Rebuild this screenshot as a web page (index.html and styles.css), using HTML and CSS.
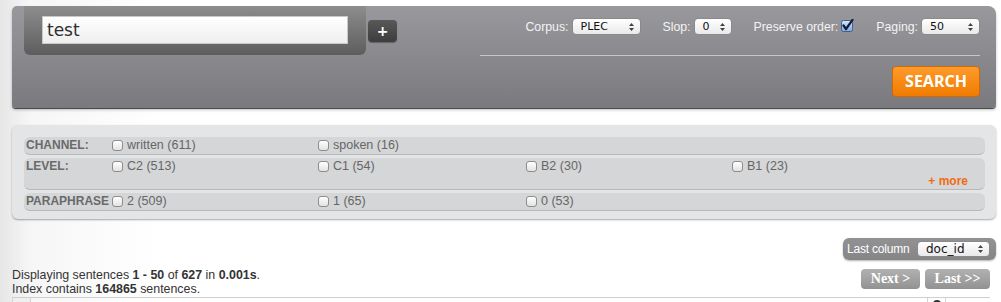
FILE: index.html
```html
<!DOCTYPE html>
<html>
<head>
<meta charset="utf-8">
<title>Search</title>
<link rel="stylesheet" href="styles.css">
</head>
<body>
<div class="top-panel">
  <div class="query-box"><div class="query-input">test</div></div>
  <div class="plus-btn">+</div>
  <div class="controls">
    <div class="options">
      <span class="opt"><span class="lbl">Corpus:</span><span class="sel sel-corpus">PLEC<svg class="arr" width="5" height="8" viewBox="0 0 5 8"><path d="M2.5 0 L5 3 H0Z M2.5 8 L5 5 H0Z" fill="#444"/></svg></span></span>
      <span class="opt"><span class="lbl">Slop:</span><span class="sel sel-slop">0<svg class="arr" width="5" height="8" viewBox="0 0 5 8"><path d="M2.5 0 L5 3 H0Z M2.5 8 L5 5 H0Z" fill="#444"/></svg></span></span>
      <span class="opt"><span class="lbl">Preserve order:</span><svg class="chk" width="13" height="13" viewBox="0 0 13 13"><defs><linearGradient id="cb" x1="0" y1="0" x2="0" y2="1"><stop offset="0" stop-color="#d9e8fb"/><stop offset="1" stop-color="#7fa7dd"/></linearGradient></defs><rect x="0.5" y="1.5" width="11" height="11" rx="2" fill="url(#cb)" stroke="#3d5f93"/><path d="M2.5 6.5 L5 10 L11.5 0.8" fill="none" stroke="#0f1d3a" stroke-width="2.2" stroke-linecap="round" stroke-linejoin="round"/></svg></span>
      <span class="opt"><span class="lbl">Paging:</span><span class="sel sel-paging">50<svg class="arr" width="5" height="8" viewBox="0 0 5 8"><path d="M2.5 0 L5 3 H0Z M2.5 8 L5 5 H0Z" fill="#444"/></svg></span></span>
    </div>
    <div class="actions"><div class="search-btn">SEARCH</div></div>
  </div>
</div>

<div class="filter-panel">
  <div class="frow">
    <div class="flabel">CHANNEL:</div>
    <div class="fopt"><span class="cb"></span>written (611)</div>
    <div class="fopt"><span class="cb"></span>spoken (16)</div>
  </div>
  <div class="frow frow-tall">
    <div class="flabel">LEVEL:</div>
    <div class="fopt"><span class="cb"></span>C2 (513)</div>
    <div class="fopt fopt-wide"><span class="cb"></span>C1 (54)</div>
    <div class="fopt"><span class="cb"></span>B2 (30)</div>
    <div class="fopt fopt-last"><span class="cb"></span>B1 (23)</div>
    <div class="more">+ more</div>
  </div>
  <div class="frow">
    <div class="flabel">PARAPHRASE</div>
    <div class="fopt"><span class="cb"></span>2 (509)</div>
    <div class="fopt fopt-wide"><span class="cb"></span>1 (65)</div>
    <div class="fopt"><span class="cb"></span>0 (53)</div>
  </div>
</div>

<div class="lastcol">
  <span class="lastcol-lbl">Last column</span>
  <span class="sel sel-lastcol">doc_id<svg class="arr" width="5" height="8" viewBox="0 0 5 8"><path d="M2.5 0 L5 3 H0Z M2.5 8 L5 5 H0Z" fill="#444"/></svg></span>
</div>

<div class="status-row">
  <div class="status">
    <div>Displaying sentences <b>1 - 50</b> of <b>627</b> in <b>0.001s</b>.</div>
    <div>Index contains <b>164865</b> sentences.</div>
  </div>
  <div class="pager">
    <span class="pbtn pbtn-next">Next &gt;</span>
    <span class="pbtn pbtn-last">Last &gt;&gt;</span>
  </div>
</div>

<div class="results">
  <div class="rc rc-a"></div>
  <div class="rc rc-b"></div>
  <div class="rc rc-c"><span class="dot"></span></div>
  <div class="rc rc-d"></div>
</div>
</body>
</html>
```

FILE: styles.css
```css
html, body {
  margin: 0;
  padding: 0;
}
body {
  background: linear-gradient(to right, #e6e6e6 0, #f6f6f6 30px, #fff 160px, #fff 100%);
  font-family: "Liberation Sans", Arial, sans-serif;
  font-size: 12px;
  color: #333;
  overflow: hidden;
}

/* ---------- top panel ---------- */
.top-panel {
  margin: 6px 5px 0 12px;
  height: 102px;
  display: flex;
  align-items: flex-start;
  background: linear-gradient(#99989d, #7a797e);
  border-radius: 5px 8px 4px 4px;
  box-shadow: 0 1px 0 #4a4a4c, 0 2px 3px rgba(0,0,0,0.25);
}
.query-box {
  margin-left: 12px;
  width: 342px;
  height: 49px;
  box-sizing: border-box;
  padding: 10px 18px;
  background: linear-gradient(#8d8d8d, #5d5d5d);
  border-radius: 0 0 6px 6px;
}
.query-input {
  height: 28px;
  box-sizing: border-box;
  background: linear-gradient(#ffffff, #eeeeee);
  border: 1px solid #c9c9c9;
  padding-left: 4px;
  font-family: "DejaVu Sans", sans-serif;
  font-size: 17px;
  line-height: 26px;
  color: #2e2e2e;
}
.plus-btn {
  margin: 14px 0 0 2px;
  width: 29px;
  height: 22px;
  background: linear-gradient(#585858, #3d3d3d);
  border-radius: 4px;
  color: #fff;
  font-family: "DejaVu Sans", sans-serif;
  font-weight: bold;
  font-size: 14px;
  line-height: 22px;
  text-align: center;
  box-shadow: 0 1px 1px rgba(0,0,0,0.3);
}
.controls {
  margin-left: auto;
  margin-right: 16px;
  width: 500px;
  display: flex;
  flex-direction: column;
}
.options {
  height: 50px;
  box-sizing: border-box;
  padding-top: 12px;
  border-bottom: 1px solid #c7c6ca;
  display: flex;
  justify-content: flex-end;
  align-items: flex-start;
}
.opt {
  display: flex;
  align-items: center;
  height: 17px;
  margin-left: 22px;
}
.lbl {
  color: #f3f3f3;
  font-size: 12.3px;
  margin-right: 3px;
}
.sel {
  display: flex;
  align-items: center;
  justify-content: space-between;
  box-sizing: border-box;
  height: 17px;
  padding: 0 6px 0 8px;
  background: linear-gradient(#ffffff, #e9e9e9);
  border: 1px solid #8a8a8a;
  border-radius: 4px;
  font-family: "DejaVu Sans", sans-serif;
  font-size: 11px;
  color: #111;
}
.sel-corpus { width: 69px; }
.sel-slop { width: 38px; }
.sel-paging { width: 59px; }
.chk { display: block; margin-top: -2px; }
.actions {
  display: flex;
  justify-content: flex-end;
  padding-top: 10px;
}
.search-btn {
  width: 88px;
  height: 31px;
  box-sizing: border-box;
  background: linear-gradient(#fe9a2c, #f07c00);
  border: 1px solid #cf6b05;
  border-radius: 4px;
  color: #fff;
  font-family: "Open Sans", sans-serif;
  font-weight: bold;
  font-size: 16px;
  line-height: 29px;
  text-align: center;
}

/* ---------- filter panel ---------- */
.filter-panel {
  margin: 17px 5px 0 12px;
  padding: 12px 11px 8px 12px;
  background: #e4e5e6;
  border-radius: 6px;
  box-shadow: 0 1px 2px rgba(0,0,0,0.35);
  display: flex;
  flex-direction: column;
  gap: 3px;
}
.frow {
  display: flex;
  align-items: flex-start;
  height: 18px;
  box-sizing: border-box;
  background: #d5d6d8;
  border-radius: 6px;
  border-bottom: 1px solid #b7b8ba;
  color: #666;
  line-height: 17px;
}
.frow-tall { height: 32px; }
.flabel {
  width: 88px;
  flex: none;
  box-sizing: border-box;
  padding-left: 2px;
  font-weight: bold;
  font-size: 12px;
  color: #6a6a6a;
  white-space: nowrap;
}
.fopt {
  width: 206px;
  flex: none;
  display: flex;
  align-items: center;
  font-size: 12.5px;
}
.fopt-wide { width: 208px; }
.fopt-last { width: auto; }
.cb {
  width: 11px;
  height: 11px;
  box-sizing: border-box;
  margin-right: 4px;
  border: 1px solid #8d8d8d;
  border-radius: 3px;
  background: linear-gradient(#ffffff, #e2e2e2);
}
.more {
  margin-left: auto;
  align-self: flex-end;
  padding-right: 17px;
  margin-bottom: 1px;
  line-height: 14px;
  font-weight: bold;
  font-size: 12px;
  color: #f26b13;
}

/* ---------- last column ---------- */
.lastcol {
  margin: 19px 5px 0 auto;
  width: 153px;
  height: 22px;
  box-sizing: border-box;
  padding: 0 6px 0 4px;
  display: flex;
  align-items: center;
  justify-content: space-between;
  background: linear-gradient(#929294, #858587);
  border-radius: 6px;
  box-shadow: 0 1px 2px rgba(0,0,0,0.3);
}
.lastcol-lbl {
  color: #fff;
  font-size: 12px;
  letter-spacing: -0.2px;
}
.sel-lastcol {
  width: 73px;
  height: 16px;
  font-size: 12px;
}

/* ---------- status ---------- */
.status-row {
  margin: 9px 11px 0 12px;
  display: flex;
  justify-content: space-between;
  align-items: flex-start;
}
.status {
  font-size: 12.4px;
  line-height: 14px;
  color: #333;
  margin-top: -1px;
}
.status b { color: #333; }
.pager {
  display: flex;
  gap: 5px;
}
.pbtn {
  height: 20px;
  box-sizing: border-box;
  background: linear-gradient(#b1b1b1, #929292);
  border-radius: 4px;
  color: #fff;
  font-family: "Liberation Serif", serif;
  font-weight: bold;
  font-size: 14px;
  line-height: 20px;
  text-align: center;
}
.pbtn-next { width: 59px; }
.pbtn-last { width: 65px; }

/* ---------- results ---------- */
.results {
  margin: 1px 11px 0 12px;
  height: 20px;
  display: flex;
  border-top: 1px solid #cfcfcf;
}
.rc { border-left: 1px solid #d4d4d4; height: 20px; }
.rc-a { width: 17px; background: #efefef; }
.rc-b { width: 896px; }
.rc-c { width: 17px; position: relative; }
.rc-d { flex: 1; }
.dot {
  position: absolute;
  left: 5px;
  top: 2px;
  width: 8px;
  height: 8px;
  border-radius: 50%;
  background: #333;
}
```
